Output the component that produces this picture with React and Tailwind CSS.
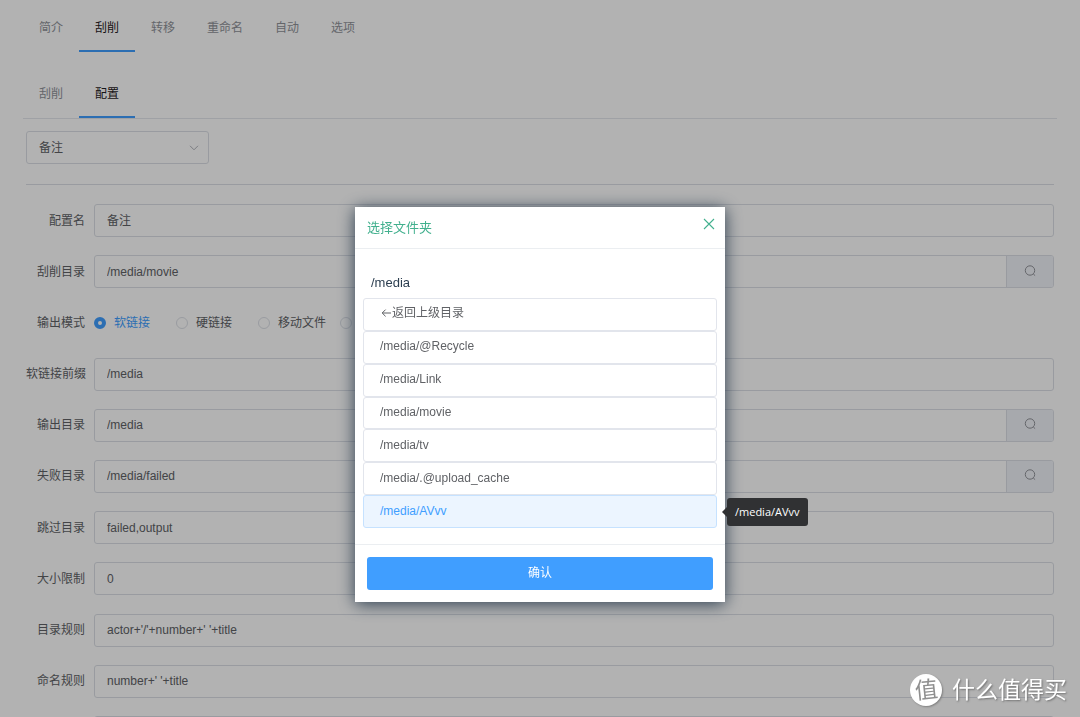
import React, { useState } from "react";

function Tabs({ items, active, label }) {
  return (
    <nav aria-label={label} className="flex">
      {items.map((item) => (
        <button
          key={item}
          type="button"
          className={
            "h-[52px] border-b-2 px-4 pt-1.5 " +
            (item === active
              ? "border-[#409eff] text-[#1f2023]"
              : "border-transparent text-[#909399]")
          }
        >
          {item}
        </button>
      ))}
    </nav>
  );
}

function SearchIcon() {
  return (
    <svg viewBox="0 0 12 12" className="size-3" fill="none" stroke="currentColor" aria-hidden="true">
      <circle cx="6" cy="5.5" r="4.7" />
      <path d="M9.3 9l1.8 1.6" />
    </svg>
  );
}

function TextRow({ id, label, value, search }) {
  return (
    <>
      <label htmlFor={id} className="text-right">
        {label}
      </label>
      <div className="flex h-[33px] overflow-hidden rounded-[3px] border border-[#dcdfe6]">
        <input
          id={id}
          type="text"
          aria-label={label}
          defaultValue={value}
          className="min-w-0 flex-1 px-3 outline-none"
        />
        {search && (
          <button
            type="button"
            aria-label={"选择" + label}
            className="flex w-[47px] items-center justify-center border-l border-[#dcdfe6] bg-[#f0f2f8] pb-0.5 text-[#909399]"
          >
            <SearchIcon />
          </button>
        )}
      </div>
    </>
  );
}

const modes = [
  { value: "soft", text: "软链接" },
  { value: "hard", text: "硬链接" },
  { value: "move", text: "移动文件" },
  { value: "copy", text: "" },
];

function ModeRow() {
  const [mode, setMode] = useState("soft");
  return (
    <>
      <span className="text-right">输出模式</span>
      <div role="radiogroup" aria-label="输出模式" className="flex h-[33px] items-center">
        {modes.map(({ value, text }) => (
          <label
            key={value}
            className={
              "flex w-[82px] items-center gap-2 whitespace-nowrap " + (mode === value ? "text-[#409eff]" : "")
            }
          >
            <input
              type="radio"
              name="mode"
              value={value}
              aria-label={text || value}
              checked={mode === value}
              onChange={() => setMode(value)}
              className="size-3 shrink-0 appearance-none rounded-full border border-[#dcdfe6] bg-white checked:border-4 checked:border-[#409eff]"
            />
            {text}
          </label>
        ))}
      </div>
    </>
  );
}

const folders = [
  "/media/@Recycle",
  "/media/Link",
  "/media/movie",
  "/media/tv",
  "/media/.@upload_cache",
  "/media/AVvv",
];

function FolderDialog() {
  return (
    <section
      role="dialog"
      aria-label="选择文件夹"
      className="w-[370px] bg-white text-[#606266] shadow-[0_2px_16px_#2c3e50]"
    >
      <header className="flex h-[42px] items-center justify-between border-b border-[#ebeef1] px-3 text-[#42b08e]">
        <h2 className="text-[13px]">选择文件夹</h2>
        <button type="button" aria-label="关闭" className="-mt-2 -mr-px">
          <svg viewBox="0 0 10 10" className="size-[10px] overflow-visible" stroke="currentColor" strokeWidth="1.1">
            <path d="M0 0l10 10M10 0L0 10" />
          </svg>
        </button>
      </header>
      <div className="px-2 pt-6 pb-4">
        <p className="px-2 pb-[5px] text-[13px] leading-5 text-[#2c3e50]">/media</p>
        <ul className="grid min-h-[230px]">
          <li className="grid">
            <button type="button" className="flex items-center rounded-[3px] border border-[#e2e5ec] px-4 pb-0.5">
              <svg viewBox="0 0 12 12" className="size-3" fill="none" stroke="currentColor" aria-hidden="true">
                <path d="M11 6H2.2M5.6 2.6L2.2 6l3.4 3.4" />
              </svg>
              返回上级目录
            </button>
          </li>
          {folders.map((path) => {
            const active = path === "/media/AVvv";
            return (
              <li key={path} className="relative grid">
                <button
                  type="button"
                  className={
                    "rounded-[3px] border px-4 pb-0.5 text-left " +
                    (active ? "border-[#c6e2ff] bg-[#ecf5ff] text-[#409eff]" : "border-[#e2e5ec]")
                  }
                >
                  {path}
                </button>
                {active && (
                  <span
                    role="tooltip"
                    className="absolute top-1/2 left-full ml-[10px] -translate-y-1/2 rounded-[3px] bg-[#303133] px-2 py-1.5 font-['Open_Sans',sans-serif] text-[11px] leading-4 text-white"
                  >
                    <span className="absolute top-1/2 right-full -translate-y-1/2 border-y-[5px] border-r-[5px] border-y-transparent border-r-[#303133]" />
                    {path}
                  </span>
                )}
              </li>
            );
          })}
        </ul>
      </div>
      <footer className="border-t border-[#ebeef1] p-3">
        <button type="button" className="h-[33px] w-full rounded-[3px] bg-[#409eff] pb-0.5 text-white">
          确认
        </button>
      </footer>
    </section>
  );
}

function Watermark() {
  return (
    <div className="fixed right-[13px] bottom-[11px] flex items-center gap-[10px] text-white">
      <span className="flex size-8 items-center justify-center rounded-full bg-white text-[23px] leading-none text-[#8f8f8f] shadow-[1px_1px_2px_#808080]">
        <span className="-rotate-6">值</span>
      </span>
      <span className="text-[23px] leading-8 [text-shadow:1px_1px_2px_#707070]">什么值得买</span>
    </div>
  );
}

export default function App() {
  return (
    <div className="h-screen overflow-hidden bg-white font-['Liberation_Sans','Noto_Sans_CJK_SC',sans-serif] text-[12px] leading-4 text-[#606266]">
      <main className="px-[23px]">
        <Tabs label="主菜单" items={["简介", "刮削", "转移", "重命名", "自动", "选项"]} active="刮削" />
        <div className="mt-[14px] border-b border-[#e4e7ed]">
          <Tabs label="子菜单" items={["刮削", "配置"]} active="配置" />
        </div>
        <div className="px-[3px] pt-3">
          <div className="relative w-[183px]">
            <select
              aria-label="配置"
              className="h-[33px] w-full appearance-none rounded-[3px] border border-[#dcdfe6] bg-white px-3"
            >
              <option>备注</option>
            </select>
            <svg
              viewBox="0 0 10 6"
              className="pointer-events-none absolute top-[14px] right-[10px] h-[6px] w-[10px]"
              fill="none"
              stroke="#b0b3ba"
              aria-hidden="true"
            >
              <path d="M1 .8l4 4 4-4" />
            </svg>
          </div>
          <hr className="mt-5 mb-[19px] border-[#dcdfe6]" />
          <form className="grid min-h-[545px] grid-cols-[59px_1fr] content-between items-center gap-x-[9px] whitespace-nowrap">
            <TextRow id="name" label="配置名" value="备注" />
            <TextRow id="source" label="刮削目录" value="/media/movie" search />
            <ModeRow />
            <TextRow id="prefix" label="软链接前缀" value="/media" />
            <TextRow id="output" label="输出目录" value="/media" search />
            <TextRow id="failed" label="失败目录" value="/media/failed" search />
            <TextRow id="skip" label="跳过目录" value="failed,output" />
            <TextRow id="size" label="大小限制" value="0" />
            <TextRow id="folder-rule" label="目录规则" value={"actor+'/'+number+' '+title"} />
            <TextRow id="name-rule" label="命名规则" value={"number+' '+title"} />
            <TextRow id="extra-rule" label="" value="" />
          </form>
        </div>
      </main>
      <div className="fixed inset-0 flex items-start justify-center bg-black/30 pt-[207px]">
        <FolderDialog />
      </div>
      <Watermark />
    </div>
  );
}
